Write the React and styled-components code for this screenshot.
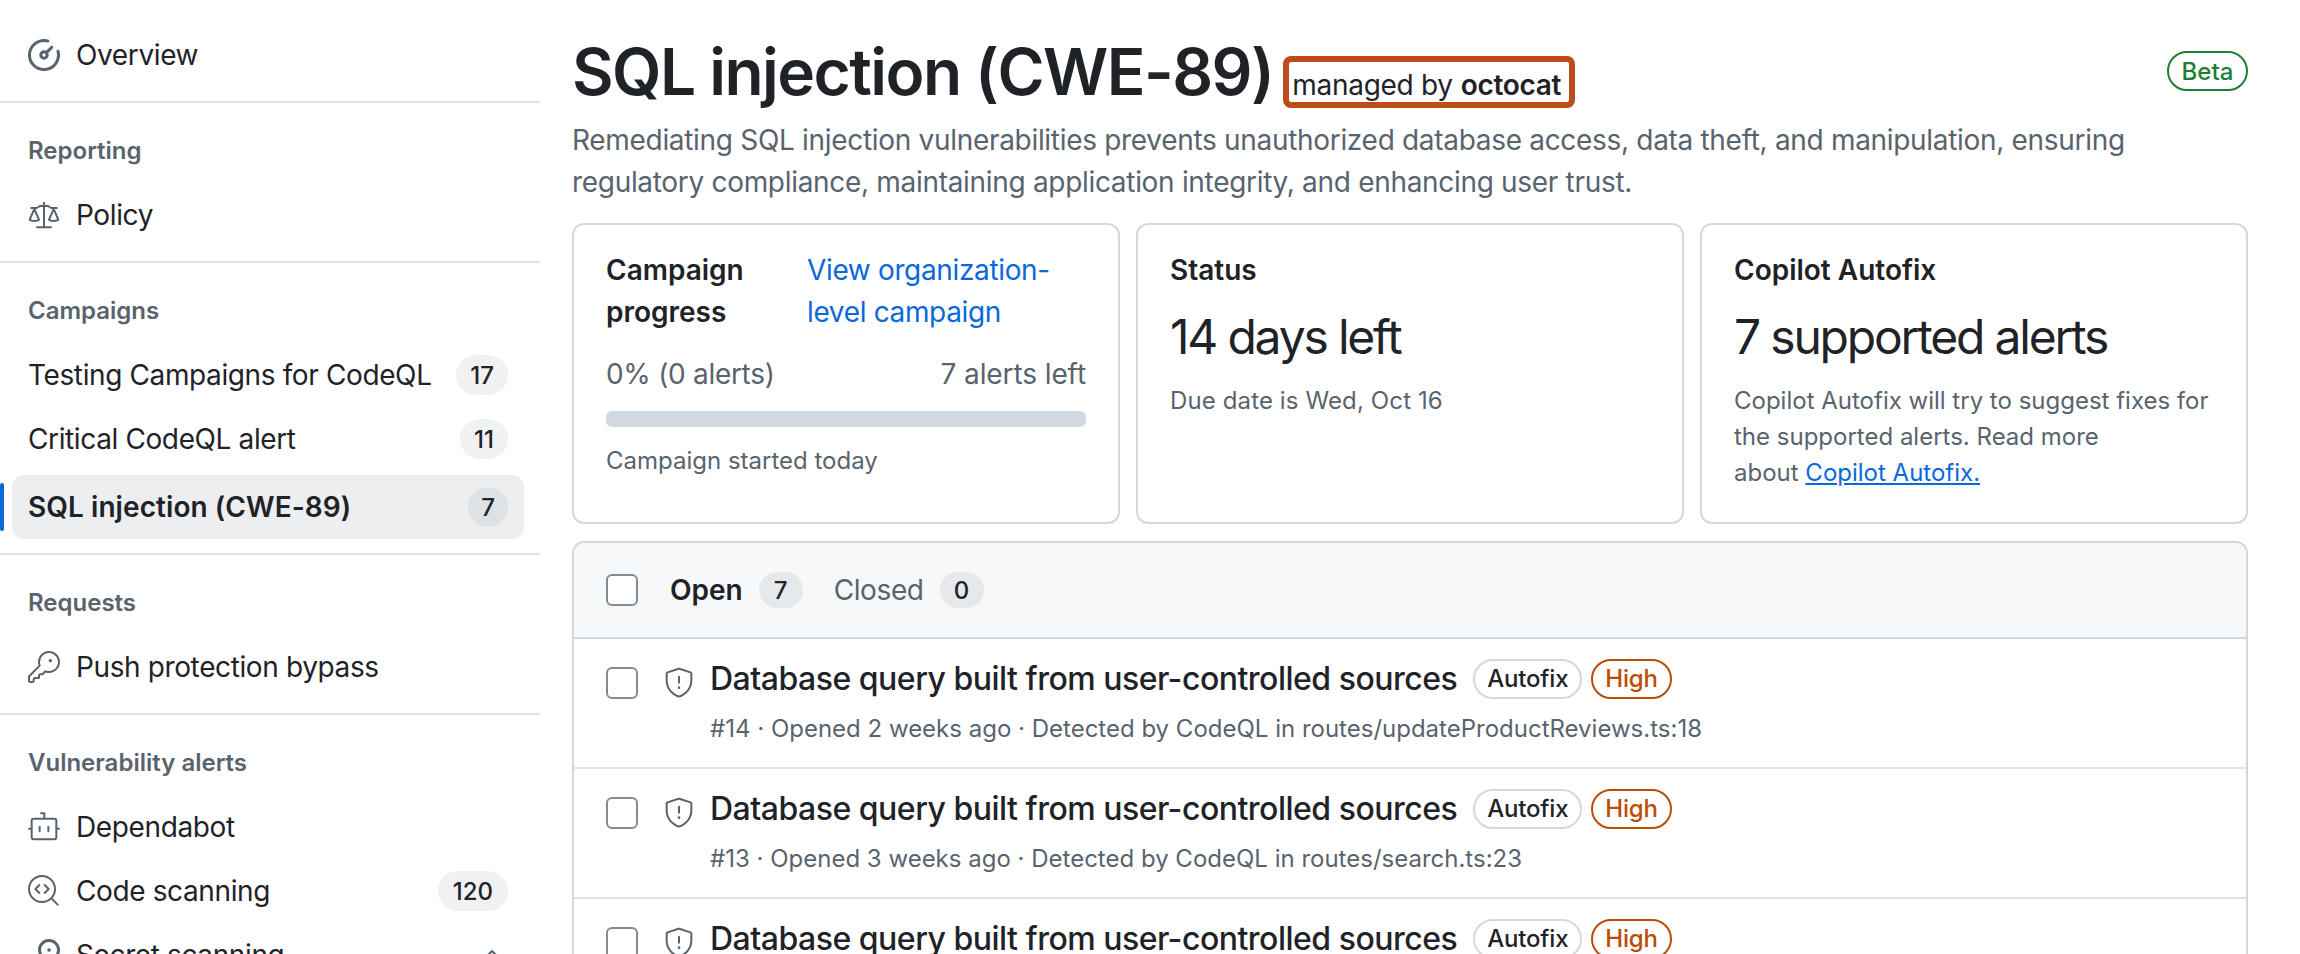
import React from "react";
import styled, { createGlobalStyle } from "styled-components";
import { GoLaw, GoKey, GoDependabot, GoCodescan, GoShield, GoChevronUp } from "react-icons/go";

const Global = createGlobalStyle`
  html, body { margin: 0; padding: 0; background: #fff; height: 954px; overflow: hidden; }
  body { font-family: Inter, "Liberation Sans", sans-serif; color: #1f2328; }
  * { box-sizing: border-box; }
`;

const Page = styled.div`
  display: flex;
  width: 2300px;
  height: 954px;
  overflow: hidden;
`;

const Sidebar = styled.nav`
  width: 540px;
  flex: none;
`;

const Section = styled.section`
  padding: ${(p) => p.$pad || "21px 0 14px"};
  border-bottom: ${(p) => (p.$last ? "none" : "2px solid #dfe4e9")};
`;

const Heading = styled.h3`
  margin: 0 0 7px;
  padding: 0 28px;
  height: 52px;
  display: flex;
  align-items: center;
  font-size: 24px;
  font-weight: 600;
  color: #59636e;
`;

const Item = styled.a`
  position: relative;
  display: flex;
  align-items: center;
  height: 64px;
  margin: ${(p) => (p.$active ? "4px 16px 0 12px" : "0 16px 0 12px")};
  padding: 0 16px;
  border-radius: 12px;
  font-size: 28px;
  letter-spacing: ${(p) => (p.$active ? "0.07px" : "-0.38px")};
  font-weight: ${(p) => (p.$active ? 600 : 400)};
  background: ${(p) => (p.$active ? "#eceef0" : "transparent")};
  color: #1f2328;
  svg { flex: none; width: 32px; height: 32px; color: #59636e; margin-right: 16px; }
`;

const Indicator = styled.span`
  position: absolute;
  left: -12px;
  top: 8px;
  width: 4px;
  height: 48px;
  border-radius: 3px;
  background: #0969da;
`;

const Count = styled.span`
  margin-left: auto;
  height: 40px;
  min-width: 40px;
  padding: 0 ${(p) => p.$px || 14}px;
  display: inline-flex;
  align-items: center;
  justify-content: center;
  border-radius: 20px;
  font-size: 24px;
  font-weight: 500;
  letter-spacing: 0;
  color: #1f2328;
  background: ${(p) => (p.$dark ? "#dfe2e5" : "#eff1f3")};
`;

const Caret = styled(GoChevronUp)`
  && { margin: 0 0 0 auto; }
`;

const MeterIcon = () => (
  <svg viewBox="0 0 16 16" fill="none" stroke="currentColor" strokeWidth="1.5" strokeLinecap="round">
    <path d="M9.88 1A7.25 7.25 0 1 0 15 6.12" />
    <circle cx="8" cy="8" r="1.6" />
    <path d="M9.2 6.8 11.9 4.1" />
  </svg>
);

const SecretIcon = () => (
  <svg viewBox="0 0 16 16" fill="none" stroke="currentColor" strokeWidth="1.5" strokeLinecap="round">
    <circle cx="10.5" cy="5.5" r="4.75" />
    <circle cx="10.5" cy="5.5" r="0.9" fill="currentColor" stroke="none" />
    <path d="M7 9 3 13v2h2" />
  </svg>
);

const Main = styled.main`
  width: 1676px;
  margin-left: 32px;
  flex: none;
`;

const TitleRow = styled.div`
  display: flex;
  align-items: flex-start;
  padding-top: 32px;
  height: 119px;
`;

const Title = styled.h1`
  margin: 0;
  font-size: 64px;
  line-height: 80px;
  font-weight: 600;
  letter-spacing: -1.55px;
  white-space: nowrap;
`;

const Managed = styled.span`
  margin: 24px 0 0 10px;
  height: 52px;
  display: inline-flex;
  align-items: center;
  padding: 6px 8px 0 3px;
  border: 6px solid #bc4c1a;
  border-radius: 8px;
  font-size: 28px;
  letter-spacing: -0.3px;
  white-space: nowrap;
  b { font-weight: 600; margin-left: 8px; }
`;

const Beta = styled.span`
  margin: 19px 0 0 auto;
  height: 40px;
  width: 81px;
  display: inline-flex;
  align-items: center;
  justify-content: center;
  border: 2px solid #1a7f37;
  border-radius: 20px;
  font-size: 24px;
  font-weight: 500;
  color: #1a7f37;
`;

const Description = styled.p`
  margin: 0;
  height: 84px;
  font-size: 28px;
  line-height: 42px;
  letter-spacing: -0.31px;
  color: #59636e;
  width: 1640px;
`;

const Cards = styled.div`
  display: grid;
  grid-template-columns: repeat(3, 548px);
  gap: 16px;
  margin-top: 20px;
`;

const Card = styled.div`
  height: 301px;
  padding: 24px 32px 0;
  border: 2px solid #d1d9e0;
  border-radius: 12px;
`;

const CardHead = styled.div`
  display: grid;
  grid-template-columns: 201px 1fr;
  font-size: 28px;
  line-height: 42px;
`;

const CardTitle = styled.div`
  font-size: 28px;
  line-height: 42px;
  font-weight: 600;
`;

const BlueLink = styled.a`
  color: #0969da;
  letter-spacing: -0.35px;
`;

const Bigline = styled.div`
  font-size: 48px;
  line-height: 60px;
  margin-top: 16px;
  letter-spacing: -2.2px;
  color: #1f2328;
`;

const Note = styled.div`
  font-size: 24px;
  line-height: 36px;
  color: #59636e;
  margin-top: 16px;
  letter-spacing: ${(p) => p.$ls || 0}px;
  a { color: #0969da; text-decoration: underline; }
`;

const NoWrap = styled.span`
  white-space: nowrap;
`;

const ProgressLabels = styled.div`
  display: flex;
  justify-content: space-between;
  font-size: 28px;
  line-height: 42px;
  letter-spacing: -0.3px;
  color: #59636e;
  margin-top: 20px;
`;

const AlertsLeft = styled.span`
  letter-spacing: -0.1px;
`;

const Bar = styled.div`
  height: 16px;
  margin-top: 16px;
  border-radius: 6px;
  background: #d1d9e0;
`;

const ListBox = styled.div`
  margin-top: 17px;
  border: 2px solid #d1d9e0;
  border-radius: 12px 12px 0 0;
  border-bottom: none;
`;

const ListHeader = styled.div`
  height: 96px;
  display: flex;
  align-items: center;
  padding: 0 32px;
  background: #f6f8fa;
  border-radius: 10px 10px 0 0;
  border-bottom: 2px solid #d1d9e0;
  font-size: 28px;
`;

const Check = styled.span`
  flex: none;
  display: block;
  width: 32px;
  height: 32px;
  background: #fff;
  border: 2px solid #818b98;
  border-radius: 6px;
`;

const Tab = styled.span`
  font-weight: ${(p) => (p.$on ? 600 : 400)};
  color: ${(p) => (p.$on ? "#1f2328" : "#59636e")};
  letter-spacing: ${(p) => (p.$on ? "0" : "-0.4px")};
  margin-left: ${(p) => p.$ml}px;
`;

const TabCount = styled.span`
  margin-left: 16px;
  height: 36px;
  min-width: 44px;
  padding: 0 12px;
  display: inline-flex;
  align-items: center;
  justify-content: center;
  border-radius: 18px;
  font-size: 24px;
  font-weight: 500;
  letter-spacing: 0;
  background: #e6e9ec;
  color: #1f2328;
`;

const Row = styled.div`
  height: 130px;
  display: flex;
  padding: 28px 32px 0;
  border-bottom: 2px solid #dfe4e9;
`;

const ShieldIcon = styled(GoShield)`
  flex: none;
  width: 32px;
  height: 32px;
  margin: 0 15px 0 25px;
  color: #59636e;
`;

const RowBody = styled.div`
  min-width: 0;
`;

const RowTop = styled.div`
  display: flex;
  align-items: center;
  height: 40px;
  margin-top: -8px;
`;

const RowTitle = styled.span`
  font-size: 32px;
  font-weight: 500;
  letter-spacing: -0.5px;
  padding-bottom: 2px;
  white-space: nowrap;
  margin-right: 16px;
`;

const Label = styled.span`
  height: 40px;
  padding: 0 ${(p) => p.$px}px 1px;
  margin-right: 9px;
  display: inline-flex;
  align-items: center;
  border: 2px solid ${(p) => p.$border};
  border-radius: 20px;
  font-size: 24px;
  font-weight: 500;
  letter-spacing: -0.2px;
  color: ${(p) => p.$color};
`;

const Meta = styled.div`
  font-size: 24px;
  line-height: 36px;
  margin-top: 12px;
  color: #59636e;
  white-space: nowrap;
`;

const rows = [
  "#14 · Opened 2 weeks ago · Detected by CodeQL in routes/updateProductReviews.ts:18",
  "#13 · Opened 3 weeks ago · Detected by CodeQL in routes/search.ts:23",
  null,
];

export default function App() {
  return (
    <Page>
      <Global />
      <Sidebar>
        <Section $pad="23px 0 14px">
          <Item><MeterIcon />Overview</Item>
        </Section>
        <Section>
          <Heading>Reporting</Heading>
          <Item><GoLaw />Policy</Item>
        </Section>
        <Section>
          <Heading>Campaigns</Heading>
          <Item>Testing Campaigns for CodeQL<Count>17</Count></Item>
          <Item>Critical CodeQL alert<Count>11</Count></Item>
          <Item $active><Indicator />SQL injection (CWE-89)<Count $dark $px={13}>7</Count></Item>
        </Section>
        <Section>
          <Heading>Requests</Heading>
          <Item><GoKey />Push protection bypass</Item>
        </Section>
        <Section $pad="21px 0 0" $last>
          <Heading>Vulnerability alerts</Heading>
          <Item><GoDependabot />Dependabot</Item>
          <Item><GoCodescan />Code scanning<Count $px={15}>120</Count></Item>
          <Item><SecretIcon />Secret scanning<Caret /></Item>
        </Section>
      </Sidebar>
      <Main>
        <TitleRow>
          <Title>SQL injection (CWE-89)</Title>
          <Managed>managed by <b>octocat</b></Managed>
          <Beta>Beta</Beta>
        </TitleRow>
        <Description>
          Remediating SQL injection vulnerabilities prevents unauthorized database access, data theft, and manipulation, ensuring regulatory compliance, maintaining application integrity, and enhancing user trust.
        </Description>
        <Cards>
          <Card>
            <CardHead>
              <CardTitle>Campaign progress</CardTitle>
              <BlueLink>View organization-level campaign</BlueLink>
            </CardHead>
            <ProgressLabels><span>0% (0 alerts)</span><AlertsLeft>7 alerts left</AlertsLeft></ProgressLabels>
            <Bar />
            <Note>Campaign started today</Note>
          </Card>
          <Card>
            <CardTitle>Status</CardTitle>
            <Bigline>14 days left</Bigline>
            <Note $ls={0.12}>Due date is Wed, Oct 16</Note>
          </Card>
          <Card>
            <CardTitle>Copilot Autofix</CardTitle>
            <Bigline>7 supported alerts</Bigline>
            <Note>Copilot Autofix will try to suggest fixes for the supported alerts. Read more <NoWrap>about <a>Copilot Autofix.</a></NoWrap></Note>
          </Card>
        </Cards>
        <ListBox>
          <ListHeader>
            <Check />
            <Tab $on $ml={32}>Open</Tab><TabCount>7</TabCount>
            <Tab $ml={31}>Closed</Tab><TabCount>0</TabCount>
          </ListHeader>
          {rows.map((m, i) => (
            <Row key={i}>
              <Check />
              <ShieldIcon />
              <RowBody>
                <RowTop>
                  <RowTitle>Database query built from user-controlled sources</RowTitle>
                  <Label $border="#d1d9e0" $color="#1f2328" $px={12}>Autofix</Label>
                  <Label $border="#bc4c00" $color="#bc4c00" $px={12}>High</Label>
                </RowTop>
                {m && <Meta>{m}</Meta>}
              </RowBody>
            </Row>
          ))}
        </ListBox>
      </Main>
    </Page>
  );
}
